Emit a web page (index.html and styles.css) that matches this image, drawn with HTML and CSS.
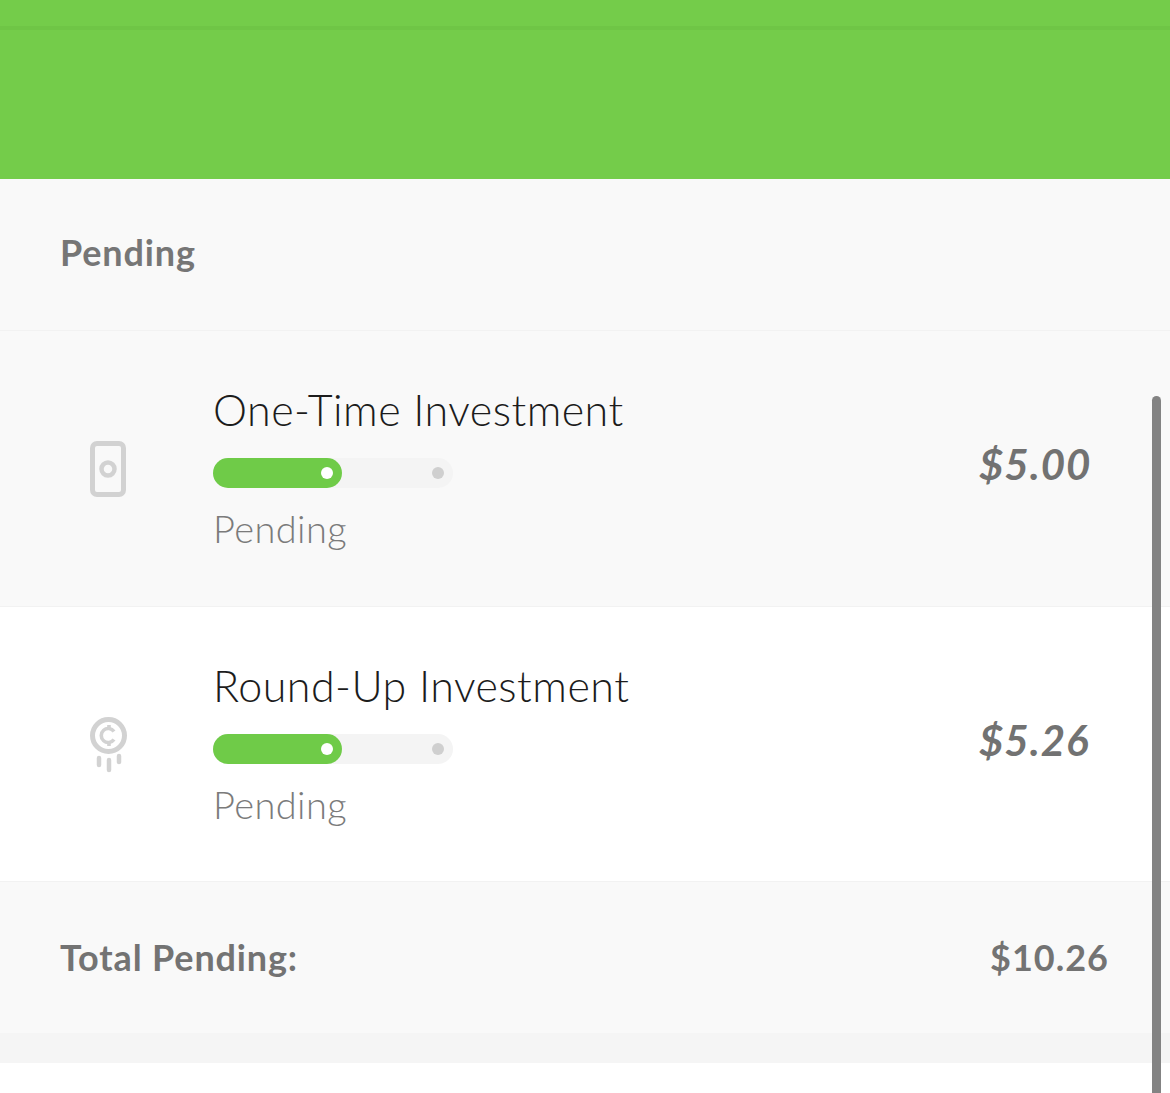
FILE: index.html
```html
<!DOCTYPE html>
<html lang="en">
<head>
<meta charset="utf-8">
<title>Pending</title>
<link rel="stylesheet" href="styles.css">
</head>
<body>
<div class="page">
  <header class="hero"><div class="hero-line"></div></header>
  <section class="section-head"><h2 class="section-title">Pending</h2></section>
  <div class="row row-grey">
    <div class="icon-cell">
      <svg class="icon" width="36" height="56" viewBox="0 0 36 56" fill="none" stroke="#d2d2d2">
        <rect x="2.500" y="2.500" width="31" height="51" rx="4.500" stroke-width="5"/>
        <circle cx="18" cy="28" r="6.500" stroke-width="4.500"/>
      </svg>
    </div>
    <div class="info">
      <div class="name">One-Time Investment</div>
      <div class="track"><div class="fill"><span class="dot-white"></span></div><span class="dot-grey"></span></div>
      <div class="status">Pending</div>
    </div>
    <div class="amount">$5.00</div>
  </div>
  <div class="row row-white">
    <div class="icon-cell">
      <svg class="icon" width="40" height="56" viewBox="0 0 40 56" fill="none" stroke="#d2d2d2">
        <circle cx="20.500" cy="18.500" r="16" stroke-width="5"/>
        <path d="M26 14.500a7 7 0 1 0 0 8" stroke-width="3.600"/>
        <path d="M21 8v4M21 25v4" stroke-width="3.600"/>
        <path d="M11 41v7M21 43v10M31 39v6" stroke-width="4.500" stroke-linecap="round"/>
      </svg>
    </div>
    <div class="info">
      <div class="name">Round-Up Investment</div>
      <div class="track"><div class="fill"><span class="dot-white"></span></div><span class="dot-grey"></span></div>
      <div class="status">Pending</div>
    </div>
    <div class="amount">$5.26</div>
  </div>
  <section class="total">
    <span class="total-label">Total Pending:</span>
    <span class="total-value">$10.26</span>
  </section>
  <div class="band"></div>
  <div class="scrollbar"></div>
</div>
</body>
</html>
```
FILE: styles.css
```css
* { box-sizing: border-box; }
html, body { margin: 0; padding: 0; background: #fff; }
body { font-family: "Lato", "Open Sans", sans-serif; overflow: hidden; }
.page { position: relative; width: 1170px; height: 1093px; overflow: hidden; }
.hero { height: 179px; background: #74cc4a; padding-top: 26px; }
.hero-line { height: 4px; background: #6fc546; }
.section-head { height: 152px; background: #f9f9f9; border-bottom: 1px solid #f2f2f2; padding: 50px 0 0 60px; }
.section-title { margin: 0; font-size: 36px; line-height: 46px; font-weight: 700; color: #767676; letter-spacing: 0.85px; }
.row { height: 276px; display: flex; border-bottom: 1px solid #f2f2f2; }
.row-grey { background: #f9f9f9; }
.row-white { background: #fff; height: 275px; }
.icon-cell { width: 213px; padding: 110px 85px 0 88px; flex: none; display: flex; justify-content: center; align-items: flex-start; }
.icon { display: block; flex: none; }
.info { width: 700px; padding-top: 52px; flex: none; }
.name { font-size: 43px; line-height: 54px; font-weight: 300; color: #1c1c1c; letter-spacing: 0.47px; }
.track { position: relative; width: 240px; height: 30px; margin-top: 21px; border-radius: 15px; background: #f4f4f4; }
.fill { position: relative; width: 129px; height: 30px; border-radius: 15px; background: #6fcb48; }
.dot-white { position: absolute; left: 108px; top: 9px; width: 12px; height: 12px; border-radius: 50%; background: #fff; }
.dot-grey { position: absolute; left: 219px; top: 9px; width: 12px; height: 12px; border-radius: 50%; background: #cfcfcf; }
.status { font-size: 38px; line-height: 48px; font-weight: 300; color: #7b7b7b; margin-top: 16px; letter-spacing: 0.4px; }
.amount { font-size: 42px; line-height: 52px; font-weight: 700; font-style: italic; color: #727272; padding-top: 107px; padding-left: 66px; letter-spacing: 1px; }
.total { height: 151px; background: #f9f9f9; display: flex; justify-content: space-between; padding: 52px 61px 0 60px; }
.total-label, .total-value { font-size: 36px; line-height: 46px; font-weight: 700; color: #737373; }
.total-label { letter-spacing: 0.85px; }
.total-value { letter-spacing: 1px; }
.band { height: 30px; background: #f5f5f5; }
.scrollbar { position: absolute; left: 1152px; top: 396px; bottom: -10px; width: 9px; border-radius: 5px; background: #838383; }
```
